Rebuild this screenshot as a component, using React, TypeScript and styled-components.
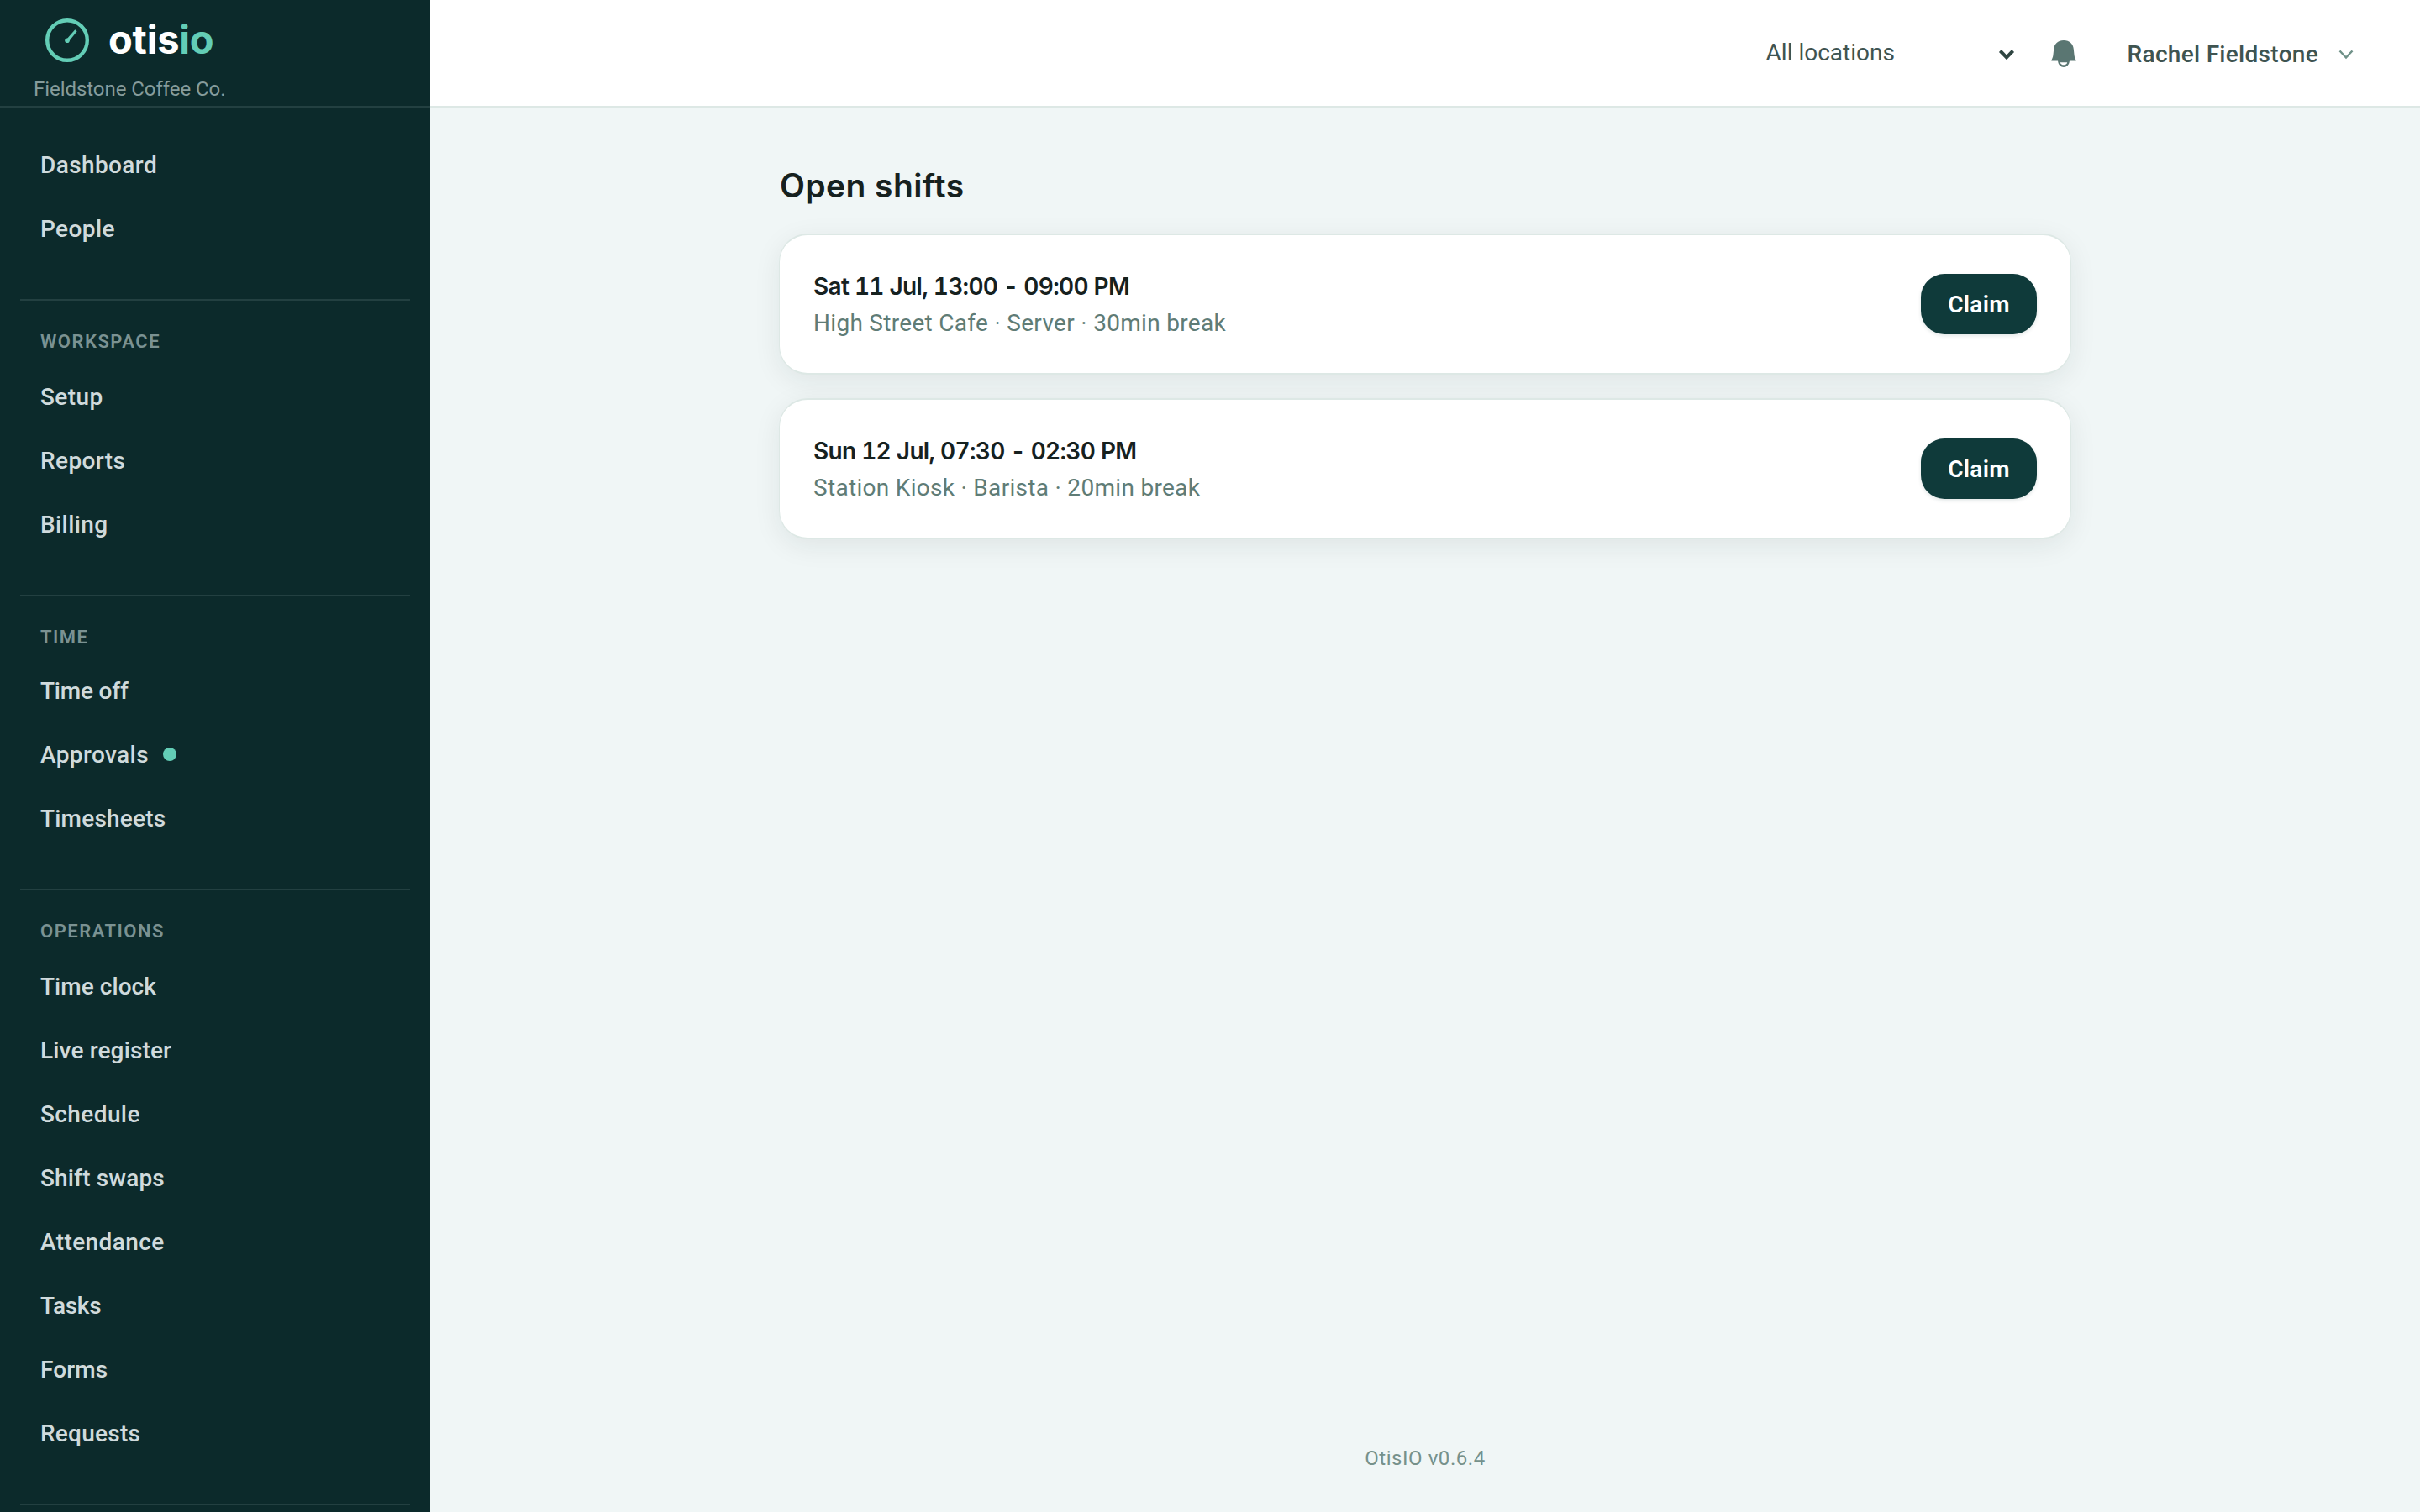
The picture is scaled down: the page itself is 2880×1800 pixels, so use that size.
import styled, { createGlobalStyle } from 'styled-components';

type NavEntry = { label: string; track?: number; dot?: boolean };
type NavGroup = { title?: string; titleHeight?: number; items: NavEntry[] };

const navGroups: NavGroup[] = [
  { items: [{ label: 'Dashboard' }, { label: 'People' }] },
  {
    title: 'Workspace',
    items: [{ label: 'Setup' }, { label: 'Reports' }, { label: 'Billing' }],
  },
  {
    title: 'Time',
    titleHeight: 45,
    items: [
      { label: 'Time off', track: -0.2 },
      { label: 'Approvals', dot: true },
      { label: 'Timesheets', track: 0.2 },
    ],
  },
  {
    title: 'Operations',
    items: [
      { label: 'Time clock', track: 0.05 },
      { label: 'Live register', track: 0.15 },
      { label: 'Schedule' },
      { label: 'Shift swaps', track: 0.15 },
      { label: 'Attendance' },
      { label: 'Tasks', track: -0.3 },
      { label: 'Forms', track: 0.1 },
      { label: 'Requests', track: 0.25 },
    ],
  },
];

const shifts = [
  {
    id: 1,
    time: 'Sat 11 Jul, 13:00 - 09:00 PM',
    detail: 'High Street Cafe · Server · 30min break',
  },
  {
    id: 2,
    time: 'Sun 12 Jul, 07:30 - 02:30 PM',
    detail: 'Station Kiosk · Barista · 20min break',
  },
];

const App = () => {
  return (
    <>
      <GlobalStyle />
      <Layout>
        <Sidebar>
          <Brand>
            <LogoRow>
              <LogoMark viewBox="0 0 52 52">
                <circle cx="26" cy="26" r="23.8" />
                <path className="hand" d="M25 25L35.3 13.2L37.6 15.2L27.8 27.4Z" />
                <circle className="hand" cx="26" cy="26.2" r="2.8" />
              </LogoMark>
              <LogoText>
                otis<span>io</span>
              </LogoText>
            </LogoRow>
            <Company>Fieldstone Coffee Co.</Company>
          </Brand>
          <Nav>
            {navGroups.map((group, i) => (
              <Group key={i}>
                {group.title && (
                  <GroupTitle $height={group.titleHeight}>
                    {group.title}
                  </GroupTitle>
                )}
                {group.items.map((item) => (
                  <NavItem key={item.label} $track={item.track}>
                    {item.label}
                    {item.dot && <Dot />}
                  </NavItem>
                ))}
              </Group>
            ))}
            <Group />
          </Nav>
        </Sidebar>
        <Main>
          <Header>
            <LocationSelect>
              All locations
              <SelectArrow viewBox="0 0 20 14">
                <path d="M2.4 2.5L10 10.3L17.6 2.5" />
              </SelectArrow>
            </LocationSelect>
            <Bell viewBox="0 0 30 32">
              <path d="M15 0C8 0 3.7 4.2 3.2 10.5L2.4 18C2.2 20.5 0.6 22.5 0.3 24.6H29.7C29.4 22.5 27.8 20.5 27.6 18L26.8 10.5C26.3 4.2 22 0 15 0Z" />
              <path
                fillRule="evenodd"
                d="M8 24C8.6 34.6 21.4 34.6 22 24ZM10.8 26.2C11.6 30.4 18.4 30.4 19.2 26.2Z"
              />
            </Bell>
            <UserMenu>
              Rachel Fieldstone
              <UserArrow viewBox="0 0 18 12">
                <path d="M1.5 1.5L9 9.5L16.5 1.5" />
              </UserArrow>
            </UserMenu>
          </Header>
          <Content>
            <Title>Open shifts</Title>
            {shifts.map((shift) => (
              <ShiftCard key={shift.id}>
                <ShiftInfo>
                  <ShiftTime>{shift.time}</ShiftTime>
                  <ShiftDetail>{shift.detail}</ShiftDetail>
                </ShiftInfo>
                <ClaimButton>Claim</ClaimButton>
              </ShiftCard>
            ))}
          </Content>
          <Footer>OtisIO v0.6.4</Footer>
        </Main>
      </Layout>
    </>
  );
};

export default App;

const GlobalStyle = createGlobalStyle`
  * {
    box-sizing: border-box;
  }
  body {
    margin: 0;
    overflow: hidden;
    font-family: Roboto, 'Liberation Sans', sans-serif;
    background: #f0f6f6;
  }
`;

const Layout = styled.div`
  display: flex;
  height: 1800px;
  overflow: hidden;
`;

const Sidebar = styled.aside`
  display: flex;
  flex-direction: column;
  flex-shrink: 0;
  width: 512px;
  height: 1800px;
  overflow: hidden;
  background: #0c2a2b;
`;

const Brand = styled.div`
  flex-shrink: 0;
  height: 128px;
  padding: 20px 40px 0;
  border-bottom: 2px solid #234041;
`;

const LogoRow = styled.div`
  display: flex;
  align-items: center;
  gap: 23px;
  height: 56px;
  padding-left: 14px;
`;

const LogoMark = styled.svg`
  width: 52px;
  height: 52px;
  margin-bottom: 1px;
  fill: none;
  stroke: #63cdb6;
  stroke-width: 4.4;
  & > .hand {
    fill: #63cdb6;
    stroke: none;
  }
`;

const LogoText = styled.div`
  margin-bottom: 3px;
  font-family: Inter, sans-serif;
  font-size: 47px;
  font-weight: 700;
  line-height: 52px;
  letter-spacing: -0.2px;
  color: #ffffff;
  & > span {
    color: #63cdb6;
  }
`;

const Company = styled.div`
  margin-top: 14px;
  font-size: 24px;
  line-height: 32px;
  letter-spacing: -0.05px;
  color: #869c9c;
`;

const Nav = styled.nav`
  padding: 0 24px;
`;

const Group = styled.div`
  padding: 30px 0 46px;
  & + & {
    padding-top: 29px;
    border-top: 2px solid #234041;
  }
`;

const GroupTitle = styled.div<{ $height?: number }>`
  height: ${(props) => props.$height ?? 47}px;
  padding-left: 24px;
  font-size: 22px;
  font-weight: 600;
  line-height: 40px;
  letter-spacing: 1.5px;
  text-transform: uppercase;
  color: #7b9292;
`;

const NavItem = styled.div<{ $track?: number }>`
  display: flex;
  align-items: center;
  height: 76px;
  padding-left: 24px;
  font-size: 28px;
  font-weight: 500;
  letter-spacing: ${(props) => props.$track ?? 0.4}px;
  color: #d0dadc;
`;

const Dot = styled.span`
  width: 16px;
  height: 16px;
  margin-left: 17px;
  border-radius: 50%;
  background: #63cdb6;
`;

const Main = styled.main`
  display: flex;
  flex-direction: column;
  flex: 1;
  background: #f0f6f6;
`;

const Header = styled.header`
  display: flex;
  align-items: center;
  justify-content: flex-end;
  height: 128px;
  padding-right: 79px;
  border-bottom: 2px solid #dde8e5;
  background: #ffffff;
`;

const LocationSelect = styled.div`
  display: flex;
  align-items: center;
  justify-content: space-between;
  width: 296px;
  margin-bottom: 1px;
  font-size: 28px;
  color: #3f5451;
`;

const SelectArrow = styled.svg`
  width: 20px;
  height: 14px;
  margin-top: 4px;
  fill: none;
  stroke: #2f4542;
  stroke-width: 4;
`;

const Bell = styled.svg`
  width: 30px;
  height: 32px;
  margin-top: 2px;
  margin-left: 43px;
  fill: #5a7672;
`;

const UserMenu = styled.div`
  display: flex;
  align-items: center;
  gap: 24px;
  margin-top: 3px;
  margin-left: 61px;
  font-size: 28px;
  font-weight: 500;
  letter-spacing: 0.3px;
  color: #3f5451;
`;

const UserArrow = styled.svg`
  width: 18px;
  height: 12px;
  fill: none;
  stroke: #6f9188;
  stroke-width: 2.4;
`;

const Content = styled.section`
  width: 1538px;
  margin: 0 auto;
  padding-top: 65px;
`;

const Title = styled.h1`
  margin: 0 0 29px;
  padding-left: 1px;
  font-family: Inter, sans-serif;
  font-size: 39px;
  font-weight: 600;
  line-height: 56px;
  letter-spacing: 0.4px;
  color: #16211f;
`;

const ShiftCard = styled.article`
  display: flex;
  align-items: center;
  justify-content: space-between;
  height: 168px;
  margin-bottom: 28px;
  padding: 0 40px;
  border: solid #dde8e5;
  border-width: 2px 1px;
  border-radius: 34px;
  background: #ffffff;
  box-shadow: 0 8px 32px rgba(20, 40, 38, 0.08);
`;

const ShiftInfo = styled.div`
  padding-top: 1px;
`;

const ShiftTime = styled.div`
  font-family: Inter, sans-serif;
  font-size: 28px;
  font-weight: 600;
  font-variant-numeric: tabular-nums;
  line-height: 44px;
  letter-spacing: -0.7px;
  color: #16211f;
`;

const ShiftDetail = styled.div`
  font-size: 28px;
  line-height: 44px;
  letter-spacing: 0.3px;
  color: #5f7c76;
`;

const ClaimButton = styled.button`
  width: 138px;
  height: 72px;
  padding: 0;
  border: none;
  border-radius: 28px;
  background: #0f3a3a;
  box-shadow: 0 2px 4px rgba(15, 58, 58, 0.12);
  font-family: Roboto, sans-serif;
  font-size: 28px;
  font-weight: 600;
  letter-spacing: 0.3px;
  color: #ffffff;
  cursor: pointer;
`;

const Footer = styled.footer`
  margin-top: auto;
  padding-bottom: 48px;
  font-size: 24px;
  line-height: 32px;
  letter-spacing: 0.55px;
  text-align: center;
  color: #76918b;
`;
